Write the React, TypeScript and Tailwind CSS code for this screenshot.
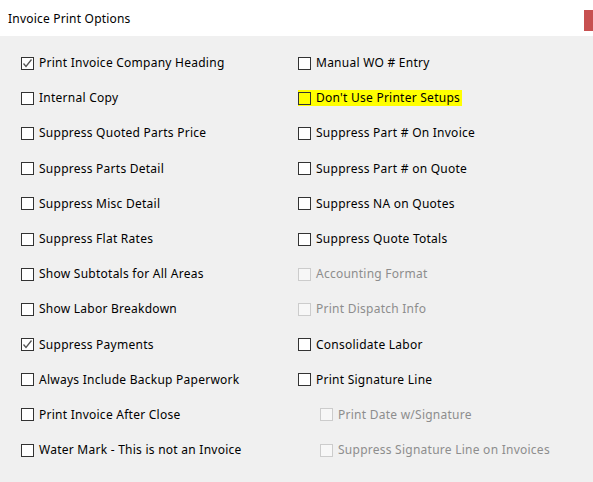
type Opt = {
  label: string
  checked?: boolean
  disabled?: boolean
  indent?: boolean
  highlight?: boolean
}

const left: Opt[] = [
  { label: 'Print Invoice Company Heading', checked: true },
  { label: 'Internal Copy' },
  { label: 'Suppress Quoted Parts Price' },
  { label: 'Suppress Parts Detail' },
  { label: 'Suppress Misc Detail' },
  { label: 'Suppress Flat Rates' },
  { label: 'Show Subtotals for All Areas' },
  { label: 'Show Labor Breakdown' },
  { label: 'Suppress Payments', checked: true },
  { label: 'Always Include Backup Paperwork' },
  { label: 'Print Invoice After Close' },
  { label: 'Water Mark - This is not an Invoice' },
]

const right: Opt[] = [
  { label: 'Manual WO # Entry' },
  { label: "Don't Use Printer Setups", highlight: true },
  { label: 'Suppress Part # On Invoice' },
  { label: 'Suppress Part # on Quote' },
  { label: 'Suppress NA on Quotes' },
  { label: 'Suppress Quote Totals' },
  { label: 'Accounting Format', disabled: true },
  { label: 'Print Dispatch Info', disabled: true },
  { label: 'Consolidate Labor' },
  { label: 'Print Signature Line' },
  { label: 'Print Date w/Signature', disabled: true, indent: true },
  { label: 'Suppress Signature Line on Invoices', disabled: true, indent: true },
]

function Check({ opt }: { opt: Opt }) {
  return (
    <div className={`h-[35.2px] flex items-center ${opt.indent ? 'pl-[22px]' : ''}`}>
      <div className={`flex items-center gap-[5px] pr-[2px] ${opt.highlight ? 'bg-[#ffff00]' : ''}`}>
        <span
          className={`w-[13px] h-[13px] border flex items-center justify-center ${
            opt.disabled
              ? 'border-[#cccccc] bg-[#f7f7f7]'
              : opt.highlight
                ? 'border-[#333333] bg-[#ffff00]'
                : 'border-[#333333] bg-white'
          }`}
        >
          {opt.checked && (
            <svg width="11" height="11" viewBox="0 0 11 11" fill="none">
              <path d="M1.5 5.5L4 8.5L9.5 1.5" stroke="#555555" strokeWidth="1.3" />
            </svg>
          )}
        </span>
        <span
          className={`text-[12px] leading-[16px] tracking-[0.25px] ${
            opt.disabled ? 'text-[#8d8d8d]' : 'text-black'
          }`}
        >
          {opt.label}
        </span>
      </div>
    </div>
  )
}

export default function App() {
  return (
    <div
      className="w-[593px] h-[482px] bg-[#f0f0f0] overflow-hidden"
      style={{ fontFamily: '"Noto Sans", "Open Sans", sans-serif' }}
    >
      {/* Title bar */}
      <div className="h-[36px] bg-white relative flex items-center pl-[8px] pt-[2px]">
        <span className="text-[12px] tracking-[0.2px] text-black">Invoice Print Options</span>
        <div className="absolute right-0 top-[10px] w-[9px] h-[21px] bg-[#c75050]" />
      </div>

      {/* Options */}
      <div className="grid grid-cols-[277px_1fr] pl-[21px] pt-[9.5px]">
        <div className="flex flex-col">
          {left.map((o) => (
            <Check key={o.label} opt={o} />
          ))}
        </div>
        <div className="flex flex-col">
          {right.map((o) => (
            <Check key={o.label} opt={o} />
          ))}
        </div>
      </div>
    </div>
  )
}
